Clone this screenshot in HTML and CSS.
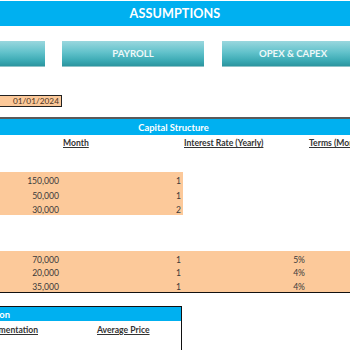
FILE: index.html
```html
<!DOCTYPE html>
<html>
<head>
<meta charset="utf-8">
<link rel="stylesheet" href="styles.css">
</head>
<body>
<div class="page">
  <div class="title">ASSUMPTIONS</div>
  <div class="nav">
    <div class="btn btn-first"></div>
    <div class="btn">PAYROLL</div>
    <div class="btn btn-last">OPEX &amp; CAPEX</div>
  </div>
  <div class="date-row"><div class="date">01/01/2024</div></div>
  <div class="rule"></div>
  <div class="section-head">Capital Structure</div>
  <div class="grid head-row">
    <div class="cell"></div>
    <div class="cell left"><span class="hdr">Month</span></div>
    <div class="cell left c3"><span class="hdr">Interest Rate (Yearly)</span></div>
    <div class="cell left c4"><span class="hdr">Terms (Months)</span></div>
  </div>
  <div class="block block-one">
    <div class="grid row1">
      <div class="cell input">150,000</div>
      <div class="cell input">1</div>
      <div class="cell"></div>
      <div class="cell"></div>
    </div>
    <div class="grid row1">
      <div class="cell input">50,000</div>
      <div class="cell input">1</div>
      <div class="cell"></div>
      <div class="cell"></div>
    </div>
    <div class="grid row1">
      <div class="cell input">30,000</div>
      <div class="cell input">2</div>
      <div class="cell"></div>
      <div class="cell"></div>
    </div>
  </div>
  <div class="block block-two">
    <div class="grid row2">
      <div class="cell">70,000</div>
      <div class="cell">1</div>
      <div class="cell">5%</div>
      <div class="cell"></div>
    </div>
    <div class="grid row2">
      <div class="cell">20,000</div>
      <div class="cell">1</div>
      <div class="cell">4%</div>
      <div class="cell"></div>
    </div>
    <div class="grid row2">
      <div class="cell">35,000</div>
      <div class="cell">1</div>
      <div class="cell">4%</div>
      <div class="cell"></div>
    </div>
  </div>
  <div class="box">
    <div class="box-head"><span>Product Information</span></div>
    <div class="box-row">
      <div class="seg"><span class="hdr">Segmentation</span></div>
      <div class="price"><span class="hdr">Average Price</span></div>
    </div>
  </div>
</div>
</body>
</html>
```

FILE: styles.css
```css
html, body {
  margin: 0;
  padding: 0;
  width: 350px;
  height: 350px;
  overflow: hidden;
  background: #ffffff;
}

.page {
  font-family: "Lato", "Liberation Sans", sans-serif;
  font-size: 8.6px;
  color: #3a3a3a;
  padding-top: 1px;
}

.title {
  height: 25px;
  line-height: 26px;
  background: #00b0f0;
  color: #ffffff;
  font-weight: 700;
  font-size: 12.6px;
  text-align: center;
  letter-spacing: 0.1px;
}

.nav {
  display: flex;
  margin-top: 15px;
  height: 25px;
}

.btn {
  flex: 0 0 142px;
  height: 25px;
  background: linear-gradient(#9ad7de 0%, #62c2cb 45%, #3aa9b3 80%, #2c959f 100%);
  color: #eef8f9;
  font-weight: 700;
  font-size: 9.6px;
  line-height: 25px;
  text-align: center;
  box-shadow: 0 1px 0 #8fc3c8;
}

.btn-first {
  flex-basis: 45px;
  margin-right: 17px;
}

.btn-last {
  margin-left: 18px;
}

.date-row {
  margin-top: 29px;
  height: 12px;
}

.date {
  width: 59px;
  height: 10px;
  border: 1px solid #222222;
  border-left: none;
  background: #fcc99a;
  color: #4a3222;
  text-align: right;
  line-height: 11px;
  padding-right: 2px;
  font-size: 8.3px;
}

.rule {
  margin-top: 10px;
  height: 2px;
  background: #5a5a5a;
}

.section-head {
  height: 16px;
  line-height: 17px;
  background: #00b0f0;
  color: #ffffff;
  font-weight: 700;
  font-size: 9.4px;
  text-align: center;
  margin-left: -3px;
}

.grid {
  display: grid;
  grid-template-columns: 61px 122px 124px 43px;
}

.cell {
  display: flex;
  justify-content: flex-end;
  align-items: flex-end;
  line-height: 10px;
  padding: 0 2px 0 2px;
  white-space: nowrap;
  overflow: visible;
  min-width: 0;
}

.cell.left {
  justify-content: flex-start;
}

.c3 {
  padding-left: 1px;
}

.hdr {
  font-weight: 700;
  text-decoration: underline;
  color: #333333;
}

.head-row {
  height: 14px;
  margin-top: 0;
}

.head-row .cell {
  align-items: center;
  padding-top: 2px;
}

.block-one {
  margin-top: 23px;
}

.row1 {
  height: 14.33px;
}

.row1 .input {
  background: #fcc99a;
}

.block-two {
  margin-top: 36px;
  background: #fcc99a;
  border-bottom: 1.5px solid #111111;
}

.row2 {
  height: 13.6px;
}

.box {
  margin-top: 13px;
  width: 181px;
  border: 1.5px solid #111111;
  border-left: none;
  border-bottom: none;
  height: 60px;
}

.box-head {
  height: 14px;
  background: #00b0f0;
  color: #ffffff;
  font-weight: 700;
  font-size: 9.4px;
  line-height: 15px;
  display: flex;
  overflow: hidden;
}

.box-head span {
  display: flex;
  justify-content: flex-end;
  width: 10px;
  flex: 0 0 10px;
  min-width: 0;
  white-space: nowrap;
}

.box-row {
  display: flex;
  height: 18px;
  align-items: center;
}

.seg {
  flex: 0 0 38px;
  min-width: 0;
  display: flex;
  justify-content: flex-end;
  white-space: nowrap;
}

.seg .hdr {
  flex: 0 0 auto;
}

.price {
  margin-left: 59px;
  white-space: nowrap;
}
```
